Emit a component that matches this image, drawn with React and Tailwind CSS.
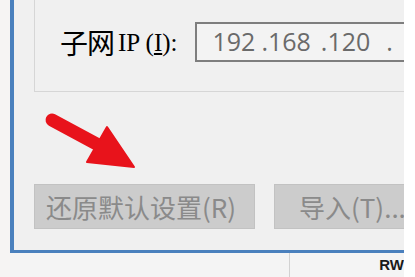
import React from "react";

const cjk = { fontFamily: '"Noto Sans CJK SC", "Liberation Sans", sans-serif' };
const serif = { fontFamily: '"Liberation Serif", "Noto Sans CJK SC", serif' };

function RedArrow() {
  return (
    <svg className="absolute left-0 top-0 pointer-events-none" width="150" height="180" viewBox="0 0 150 180">
      <line x1="52" y1="120" x2="104" y2="148" stroke="#e8131b" strokeWidth="13" strokeLinecap="round" />
      <polygon points="107,127 134,167 87,162" fill="#e8131b" stroke="#e8131b" strokeWidth="2" strokeLinejoin="round" />
    </svg>
  );
}

export default function App() {
  return (
    <div className="w-[415px] h-[277px] flex overflow-hidden bg-white">
      <div className="w-[10px] h-full bg-[#f6f4f3]" />

      <div className="w-[394px] flex flex-col">
        {/* dialog, clipped at right */}
        <div className="relative h-[253px] bg-[#f0f0f0] border-l-4 border-b-[3px] border-[#4a80bd] overflow-hidden pl-[20px]">
          {/* group box */}
          <div className="h-[92px] w-[400px] border-l border-b border-[#d6d6d6] bg-[#f0f0f0] flex items-start pt-[22px] pl-[25px]">
            <div className="flex items-center h-[40px] text-black whitespace-nowrap">
              <span className="text-[28px] leading-none tracking-[-1px]" style={cjk}>子网</span>
              <span className="text-[25px] leading-none ml-[4px]" style={serif}>
                IP (<span className="underline underline-offset-2">I</span>):
              </span>
            </div>
            <div className="ml-[17px] h-[40px] w-[260px] shrink-0 border-2 border-[#7e7e7e] bg-[#f3f3f3] flex items-center pl-[16px] text-[25px] text-[#6a6a6a] whitespace-nowrap" style={{ fontFamily: '"Open Sans", "Liberation Sans", sans-serif' }}>
              <span>192</span>
              <span className="ml-[6px]">.168</span>
              <span className="ml-[10px]">.120</span>
              <span className="ml-[16px]">.</span>
            </div>
          </div>

          {/* buttons */}
          <div className="mt-[92px] flex gap-[19px] whitespace-nowrap">
            <div className="h-[45px] w-[221px] shrink-0 bg-[#cccccc] border border-[#c2c2c2] flex items-center pl-[11px] text-[#8a8a8a]" style={cjk}>
              <span className="text-[26px] leading-none">还原默认设置(R)</span>
            </div>
            <div className="h-[45px] w-[150px] shrink-0 bg-[#cccccc] border border-[#c2c2c2] flex items-center pl-[24px] text-[#8a8a8a]" style={cjk}>
              <span className="text-[26px] leading-none">导入(T)...</span>
            </div>
          </div>

          <div className="absolute -left-[14px] top-0">
            <RedArrow />
          </div>
        </div>

        {/* window behind */}
        <div className="h-[24px] flex bg-[#f4f4f4]">
          <div className="w-[280px] border-r border-[#d2d2d2]" />
          <div className="flex-1 flex justify-end items-start overflow-hidden">
            <span className="text-[15px] font-bold leading-none text-[#1a1a1a] mt-[4px]" style={{ fontFamily: '"Liberation Sans", sans-serif' }}>RW</span>
          </div>
        </div>
      </div>

      <div className="w-[11px] h-full bg-white" />
    </div>
  );
}
